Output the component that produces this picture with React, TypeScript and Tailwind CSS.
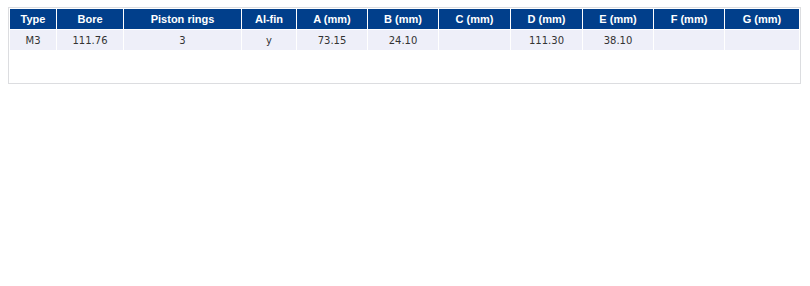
import React from "react";

const COLUMNS = [
  { label: "Type", width: "w-[46px]" },
  { label: "Bore", width: "w-[66px]" },
  { label: "Piston rings", width: "w-[117px]" },
  { label: "Al-fin", width: "w-[54px]" },
  { label: "A (mm)", width: "w-[70px]" },
  { label: "B (mm)", width: "w-[70px]" },
  { label: "C (mm)", width: "w-[71px]" },
  { label: "D (mm)", width: "w-[71px]" },
  { label: "E (mm)", width: "w-[70px]" },
  { label: "F (mm)", width: "w-[70px]" },
  { label: "G (mm)", width: "" },
];

const ROWS = [["M3", "111.76", "3", "y", "73.15", "24.10", "", "111.30", "38.10", "", ""]];

export default function App() {
  return (
    <div className="bg-white min-h-[286px] pl-2 pr-[9px] pt-[7px]">
      <div className="border border-[#dcdde0] h-[77px]">
        <table className="w-full table-fixed border-separate border-spacing-[1px]">
          <thead>
            <tr>
              {COLUMNS.map((c) => (
                <th
                  key={c.label}
                  className={`${c.width} h-[20px] p-0 bg-[#013f8b] text-white text-[11px] font-bold text-center font-['Liberation_Sans',Arial,sans-serif]`}
                >
                  {c.label}
                </th>
              ))}
            </tr>
          </thead>
          <tbody>
            {ROWS.map((row, i) => (
              <tr key={i}>
                {row.map((v, j) => (
                  <td
                    key={j}
                    className="h-[20px] p-0 bg-[#eeeff9] text-[#333] text-[10px] text-center font-['DejaVu_Sans',Verdana,sans-serif]"
                  >
                    {v}
                  </td>
                ))}
              </tr>
            ))}
          </tbody>
        </table>
      </div>
    </div>
  );
}
